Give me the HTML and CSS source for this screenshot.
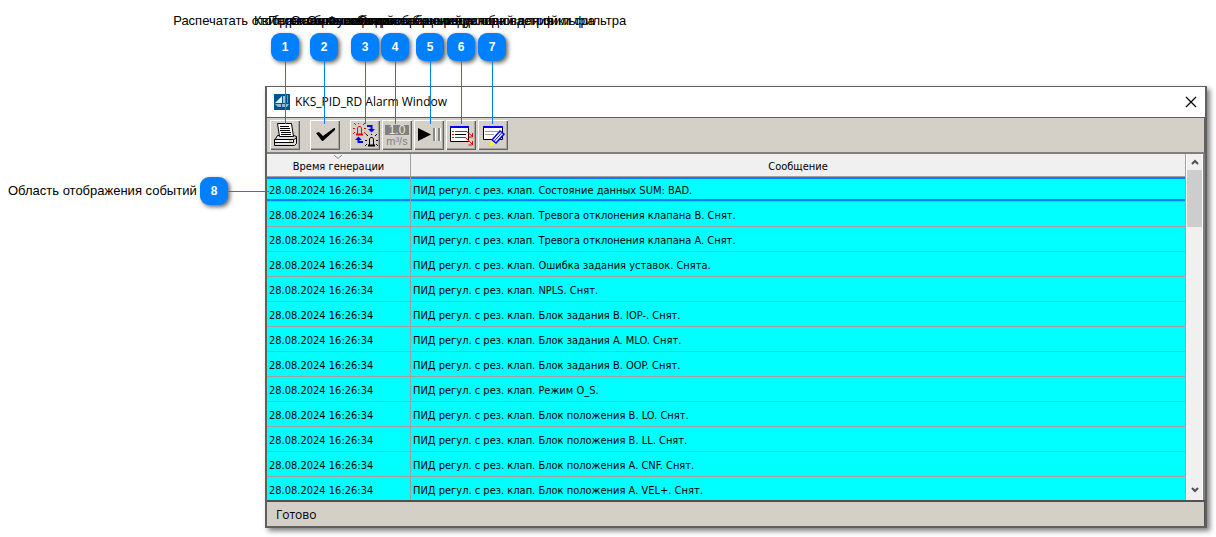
FILE: index.html
```
<!DOCTYPE html>
<html lang="ru">
<head>
<meta charset="utf-8">
<title>KKS_PID_RD Alarm Window</title>
<link rel="stylesheet" href="styles.css">
</head>
<body>
<main class="figure">
  <section class="window">
    <header class="titlebar">
      <svg class="logo" width="16" height="16" viewBox="0 0 16 16"><rect width="16" height="16" fill="#00558f"/><path d="M1 9L8 2V9Z" fill="#e7f0f5"/><path d="M9 9V2h3v7Z" fill="#a5c5d8"/><path d="M13 1h1v8h-1z" fill="#5f9cc0"/><path d="M1 10h6v3H4zM8 10h7l-2 3H8z" fill="#8fb9d0"/></svg>
      <h1 class="title">KKS_PID_RD Alarm Window</h1>
      <button class="close" aria-label="Закрыть"><svg width="12" height="12" viewBox="0 0 12 12"><path d="M1 1l10 10M11 1L1 11" stroke="#000" stroke-width="1.2"/></svg></button>
    </header>
    <div class="toolbar">
      <button class="tool spaced" aria-label="Печать"><svg width="30" height="30" viewBox="0 0 30 30"><path d="M4.500 20.500l3-5h16l3 1v7l-2 2h-20z" fill="#ddd" stroke="#000"/><path d="M7.500 3.500h14l2 13h-14z" fill="#fff" stroke="#000"/><path d="M10 6.500h9M10 8.500h10M10 10.500h10M11 12.500h10M11 14.500h10" stroke="#000"/><path d="M4.500 19.500h19v3h-19z" fill="#fff" stroke="#000"/><path d="M24 19.500l2.500-2" stroke="#000"/><path d="M5 25.500h19" stroke="#000"/><path d="M19 21h3" stroke="#c90"/></svg></button>
      <button class="tool spaced" aria-label="Квитировать"><svg width="30" height="30" viewBox="0 0 30 30"><path d="M6 13l3-1 4 4L24 8h1v2L13 21h-1z" fill="#000"/></svg></button>
      <button class="tool" aria-label="Вид сообщений"><svg width="30" height="30" viewBox="0 0 30 30" fill="none"><g stroke="#f00"><path d="M7.500 14V8l1-1.500h2l1 1.500v6"/><path d="M6 14.500h7" stroke-width="2"/><path d="M4 3l2 2M8.500 3v1M15 3l-2 2M3 8.500h2M14 8.500h2M3 14l2-2M14 12l2 2"/></g><g stroke="#000"><path d="M19.500 25v-6l1-1.500h2l1 1.500v6"/><path d="M18 25.500h7" stroke-width="2"/><path d="M16 14l2 2M21.500 14v1M27 14l-2 2M15 20.500h2M26 20.500h2M15 26l2-2M26 24l2 2"/></g><path d="M17 6h4.500v3M13 22H8.500v-3" stroke="#00f" stroke-width="2"/><path d="M18 9h7l-3.500 3.500zM5 20h7l-3.500-3.500z" fill="#00f"/></svg></button>
      <button class="tool" aria-label="Инженерные единицы"><svg width="30" height="30" viewBox="0 0 30 30"><rect x="3" y="5" width="24" height="10" fill="#808080"/><text x="15" y="14" class="unit value">1.0</text><text x="15" y="25" class="unit">m³/s</text></svg></button>
      <button class="tool" aria-label="Пауза"><svg width="30" height="30" viewBox="0 0 30 30"><path d="M4 8v13l13-6.500z"/><path d="M19 8h2v13h-2zM24 8h2v13h-2z" fill="#888"/><path d="M21.500 8v13M26.500 8v13" stroke="#fff"/></svg></button>
      <button class="tool" aria-label="Фильтр"><svg width="30" height="30" viewBox="0 0 30 30" fill="none"><path d="M4.500 6.500h18v15h-18z" fill="#fff" stroke="#000"/><path d="M4 7h19" stroke="#00f" stroke-width="2"/><path d="M6 11.500h2M6 14.500h2M6 17.500h2M9 11.500h11M9 17.500h11" stroke="#f00"/><path d="M9 14.500h11" stroke="#000"/><path d="M20 11l6 5M20 18l6 6M26.500 13v4h-4M26.500 21v4h-4" stroke="#e00"/></svg></button>
      <button class="tool" aria-label="Настройка фильтра"><svg width="30" height="30" viewBox="0 0 30 30" fill="none"><path d="M5.500 6.500h19v13h-19z" fill="#fff" stroke="#000"/><path d="M5 7h20" stroke="#00f" stroke-width="2"/><path d="M7 11.500h13M7 14.500h9" stroke="#999"/><path d="M14 20l8-9 4 3-8 9z" fill="#fff" stroke="#00f" stroke-width="1.500"/><path d="M16 21.500L24 12.500" stroke="#00f"/><path d="M13 20l4 4-5 2z" fill="#ff0"/></svg></button>
    </div>
    <div class="events">
      <div class="viewport">
      <table class="grid">
        <thead><tr><th class="time"><svg class="sort" width="8" height="4" viewBox="0 0 8 4"><path d="M0 0l4 3.500L8 0" fill="none" stroke="#888"/></svg>Время генерации</th><th>Сообщение</th></tr></thead>
        <tbody>
          <tr class="selected"><td>28.08.2024 16:26:34</td><td>ПИД регул. с рез. клап. Состояние данных SUM: BAD.</td></tr>
          <tr><td>28.08.2024 16:26:34</td><td>ПИД регул. с рез. клап. Тревога отклонения клапана B. Снят.</td></tr>
          <tr><td>28.08.2024 16:26:34</td><td>ПИД регул. с рез. клап. Тревога отклонения клапана A. Снят.</td></tr>
          <tr><td>28.08.2024 16:26:34</td><td>ПИД регул. с рез. клап. Ошибка задания уставок. Снята.</td></tr>
          <tr><td>28.08.2024 16:26:34</td><td>ПИД регул. с рез. клап. NPLS. Снят.</td></tr>
          <tr><td>28.08.2024 16:26:34</td><td>ПИД регул. с рез. клап. Блок задания B. IOP-. Снят.</td></tr>
          <tr><td>28.08.2024 16:26:34</td><td>ПИД регул. с рез. клап. Блок задания A. MLO. Снят.</td></tr>
          <tr><td>28.08.2024 16:26:34</td><td>ПИД регул. с рез. клап. Блок задания B. OOP. Снят.</td></tr>
          <tr><td>28.08.2024 16:26:34</td><td>ПИД регул. с рез. клап. Режим O_S.</td></tr>
          <tr><td>28.08.2024 16:26:34</td><td>ПИД регул. с рез. клап. Блок положения B. LO. Снят.</td></tr>
          <tr><td>28.08.2024 16:26:34</td><td>ПИД регул. с рез. клап. Блок положения B. LL. Снят.</td></tr>
          <tr><td>28.08.2024 16:26:34</td><td>ПИД регул. с рез. клап. Блок положения A. CNF. Снят.</td></tr>
          <tr><td>28.08.2024 16:26:34</td><td>ПИД регул. с рез. клап. Блок положения A. VEL+. Снят.</td></tr>
        </tbody>
      </table>
      </div>
      <div class="scrollbar">
        <button class="arrow" aria-label="Вверх"><svg width="8" height="6" viewBox="0 0 8 6"><path d="M1 5l3-3 3 3" fill="none" stroke="#505050" stroke-width="2"/></svg></button>
        <div class="thumb"></div>
        <button class="arrow down" aria-label="Вниз"><svg width="8" height="6" viewBox="0 0 8 6"><path d="M1 1l3 3 3-3" fill="none" stroke="#505050" stroke-width="2"/></svg></button>
      </div>
    </div>
    <footer class="status">Готово</footer>
  </section>

  <div class="callout c1"><span class="label">Распечатать отображаемые события</span><b class="badge">1</b><i class="leader"></i></div>
  <div class="callout c2"><span class="label">Квитирование событий</span><b class="badge">2</b><i class="leader"></i></div>
  <div class="callout c3"><span class="label">Переключение вида сообщений</span><b class="badge">3</b><i class="leader"></i></div>
  <div class="callout c4"><span class="label">Отображение инженерных единиц</span><b class="badge">4</b><i class="leader"></i></div>
  <div class="callout c5"><span class="label">Остановка и возобновление обновления</span><b class="badge">5</b><i class="leader"></i></div>
  <div class="callout c6"><span class="label">Функция отображения условий для фильтра</span><b class="badge">6</b><i class="leader"></i></div>
  <div class="callout c7"><span class="label">Открыть окно редактора настройки фильтра</span><b class="badge">7</b><i class="leader"></i></div>
  <div class="callout side"><span class="label">Область отображения событий</span><b class="badge">8</b><i class="leader"></i></div>
</main>
</body>
</html>
```
FILE: styles.css
```
* { box-sizing: border-box; }
body { margin: 0; background: #fff; color: #000; font-family: "Liberation Sans", Arial, sans-serif; }
button { margin: 0; padding: 0; font: inherit; }
svg { display: block; }
.figure { position: relative; padding: 86px 9px 9px 265px; }

.window { border: 2px solid #606060; border-top-width: 1px; background: #d4d0c8; box-shadow: 3px 3px 5px rgba(0, 0, 0, 0.5); font-family: "DejaVu Sans Condensed", "DejaVu Sans", sans-serif; font-size: 11px; }
.titlebar { display: flex; align-items: center; gap: 5px; height: 30px; padding: 0 8px 0 7px; background: #fff; }
.title { flex: 1; margin: 0; font: 12px/16px "Open Sans", sans-serif; }
.close { border: 0; background: none; }
.toolbar { display: flex; gap: 2px; padding: 2px 3px; border-top: 1px solid #606060; border-bottom: 2px solid #808080; height: 37px; border-right: 1px solid #606060; }
.tool { width: 30px; height: 30px; border: 0; background: #d4d0c8; box-shadow: inset 1px 1px #fff, inset -1px -1px #606060, inset -2px -2px #a8a49c; }
.spaced { margin-right: 8px; }
.unit { font: 11px "Liberation Sans", sans-serif; text-anchor: middle; fill: #808080; }
.value { font-size: 12px; fill: #e8e8e8; }

.events { display: flex; height: 346px; border-right: 2px solid #808080; background: #fff; }
.viewport { flex: 1; overflow: hidden; }
.grid { width: 100%; table-layout: fixed; border-spacing: 0; }
.grid th { position: relative; height: 23px; padding: 3px 0 0; border-right: 1px solid #a0a0a0; border-bottom: 1px solid #a0a0a0; background: #f0f0f0; font-weight: normal; line-height: 14px; }
.grid .time { width: 144px; }
.sort { position: absolute; top: 1px; left: 67px; }
.grid td { height: 25px; padding: 3px 2px 0; border-right: 1px solid #a0a0a0; border-bottom: 1px solid #a0a0a0; background: #0ff; line-height: 14px; white-space: nowrap; overflow: hidden; }
.grid .selected td { box-shadow: inset 0 2px #0080ff, inset 0 -2px #0080ff; }
.scrollbar { display: flex; flex-direction: column; width: 15px; margin-left: 1px; margin-right: 1px; background: #f0f0f0; }
.arrow { display: grid; place-items: center; height: 16px; border: 0; background: none; }
.down { margin-top: auto; height: 20px; }
.thumb { height: 57px; background: #cdcdcd; }
.status { height: 26px; padding: 5px 9px; border-top: 2px solid #505050; border-right: 1px solid #505050; font-family: "Open Sans", sans-serif; font-size: 12px; line-height: 16px; }

.callout { position: absolute; top: 13px; display: flex; flex-direction: column; align-items: center; width: 28px; font-size: 13px; line-height: 16px; white-space: nowrap; }
.badge { display: grid; place-items: center; flex: none; width: 28px; height: 28px; margin-top: 4px; border-radius: 9px; background: #0080ff; color: #fff; box-shadow: 2px 2px 4px rgba(0, 0, 0, 0.6); font-size: 12px; }
.leader { width: 1px; height: 63px; background: #0080ff; }
.c1 { left: 271px; }
.c2 { left: 310px; }
.c3 { left: 351px; }
.c4 { left: 381px; }
.c5 { left: 416px; }
.c6 { left: 447px; }
.c7 { left: 478px; }
.side { top: 177px; left: 8px; flex-direction: row; width: 261px; }
.side .label { flex: none; width: 192px; }
.side .badge { margin: 0; }
.side .leader { flex: 1; height: 1px; }
```
